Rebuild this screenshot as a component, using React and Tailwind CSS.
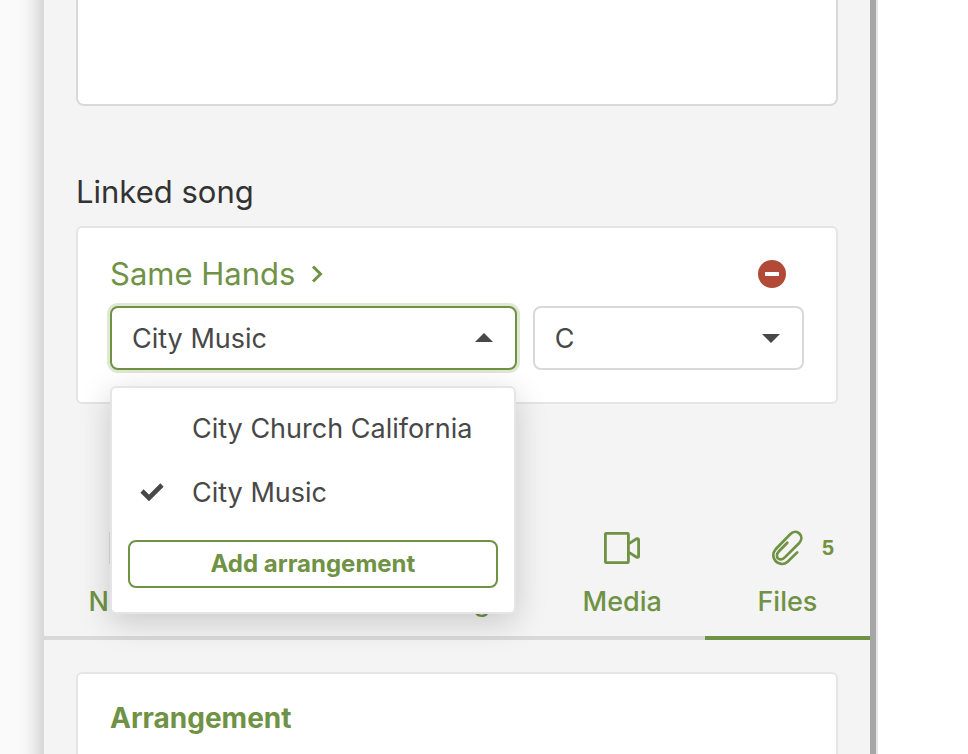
import React, { useState } from 'react';

const arrangements = ['City Church California', 'City Music'];

const tabs = [
  { id: 'notes', label: 'Notes', icon: NotesIcon },
  { id: 'times', label: 'Times' },
  { id: 'song', label: 'Song' },
  { id: 'media', label: 'Media', icon: MediaIcon },
  { id: 'files', label: 'Files', icon: PaperclipIcon, count: 5 },
];

function NotesIcon() {
  return (
    <svg width="36" height="32" viewBox="0 0 36 32" fill="none" stroke="#dedede" aria-hidden="true">
      <rect x="0.5" y="0.5" width="35" height="31" />
    </svg>
  );
}

function MediaIcon() {
  return (
    <svg width="36" height="32" viewBox="0 0 36 32" fill="none" stroke="currentColor" strokeWidth="2.8" strokeLinejoin="round" aria-hidden="true">
      <rect x="1.4" y="1.4" width="23" height="29.2" rx="0.8" />
      <path d="M25 11.6 32.6 6.8Q34.6 6 34.6 7.8V24.2Q34.6 26 32.6 25.2L25 20.4" />
    </svg>
  );
}

function PaperclipIcon() {
  return (
    <svg width="32" height="36" viewBox="0 0 32 36" fill="none" stroke="currentColor" strokeWidth="2.7" strokeLinecap="round" aria-hidden="true">
      <path d="M16.3 12.7 8 21.3C2.8 26.8 8.6 32.6 13.8 27.4L28 13.2C34.6 6.3 25.9-2.3 19.2 4.3L4.6 19.3C-2.6 27.2 8.2 39 16.6 31.7L26.2 22.4" />
    </svg>
  );
}

function Caret({ up }) {
  return (
    <svg
      className="pointer-events-none absolute top-1/2 right-6 -translate-y-1/2"
      width="18"
      height="10"
      viewBox="0 0 18 10"
      fill="#484848"
      aria-hidden="true"
    >
      <path d={up ? 'M0 9 9 0 18 9Z' : 'M0 1H18L9 10Z'} />
    </svg>
  );
}

export default function App() {
  const [arrangement, setArrangement] = useState('City Music');
  const [activeTab, setActiveTab] = useState('files');

  return (
    <div className="flex min-h-screen bg-white font-['Inter',sans-serif] text-[#484848]">
      {/* Page behind the panel */}
      <div className="w-11 shrink-0 border-r-2 border-[#d9d9d9] bg-[linear-gradient(to_right,#fafafa_40%,#f6f6f6_60%,#ebebeb_80%,#dadada)]"></div>

      <main className="min-w-0 flex-1 bg-[#f4f4f4]">
        <div className="px-8">
          <textarea
            aria-label="Description"
            className="block h-[106px] w-full resize-none rounded-b-lg border-2 border-t-0 border-[#d9d9d9] bg-white p-5 text-[27px] outline-none"
          />

          <h2 className="mt-16 pt-0.5 text-[31px] leading-10 text-[#333333]">Linked song</h2>

          <section className="mt-3.5 rounded-md border-2 border-[#e5e5e5] bg-white px-8 pt-[26px] pb-8">
            <div className="flex items-center justify-between pr-[18px]">
              <a href="#song" className="flex items-center gap-4 text-[31px] leading-10 text-[#6f9245]">
                Same Hands
                <svg width="14" height="18" viewBox="0 0 14 18" fill="none" stroke="currentColor" strokeWidth="3" aria-hidden="true">
                  <path d="M2 1.5 9.5 9 2 16.5" />
                </svg>
              </a>
              <button type="button" aria-label="Unlink song">
                <svg className="block" width="28" height="28" viewBox="0 0 28 28" aria-hidden="true">
                  <circle cx="14" cy="14" r="14" fill="#b14b38" />
                  <rect x="7" y="12" width="14" height="4" fill="#fff" />
                </svg>
              </button>
            </div>

            <div className="mt-3 flex gap-4">
              <div className="relative min-w-0 flex-[3]">
                <select
                  aria-label="Arrangement"
                  value={arrangement}
                  onChange={(e) => setArrangement(e.target.value)}
                  className="h-16 w-full appearance-none rounded-lg border-2 border-[#6f9245] bg-white px-5 pt-0.5 text-[27px] outline-none ring-3 ring-[#dfe8d3]"
                >
                  {arrangements.map((name) => (
                    <option key={name}>{name}</option>
                  ))}
                </select>
                <Caret up />

                {/* Arrangement menu */}
                <div className="absolute top-full right-px left-0 z-10 mt-4 rounded-md border-2 border-[#e5e5e5] bg-white pt-2 pb-6 shadow-[0_8px_32px_rgba(0,0,0,0.18)]">
                  {arrangements.map((name) => (
                    <button
                      key={name}
                      type="button"
                      onClick={() => setArrangement(name)}
                      className="flex h-16 w-full items-center gap-7 px-7 pt-0.5 text-left text-[27px] whitespace-nowrap"
                    >
                      <span className="w-6 shrink-0">
                        {name === arrangement && (
                          <svg className="block" width="24" height="20" viewBox="0 0 24 20" fill="none" stroke="#484848" strokeWidth="4.6" aria-hidden="true">
                            <path d="M2 8 9 15 22 2" />
                          </svg>
                        )}
                      </span>
                      {name}
                    </button>
                  ))}
                  <div className="px-4 pt-4">
                    <button
                      type="button"
                      className="h-12 w-full rounded-lg border-2 border-[#6f9245] text-2xl font-bold text-[#6f9245]"
                    >
                      Add arrangement
                    </button>
                  </div>
                </div>
              </div>

              <div className="relative min-w-0 flex-[2]">
                <select
                  aria-label="Key"
                  defaultValue="C"
                  className="h-16 w-full appearance-none rounded-lg border-2 border-[#d9d9d9] bg-white px-5 pt-0.5 text-[27px] outline-none"
                >
                  <option>C</option>
                </select>
                <Caret />
              </div>
            </div>
          </section>
        </div>

        <nav className="mt-[124px] grid grid-cols-5 text-[#6f9245]">
          {tabs.map(({ id, label, icon: Icon, count }) => (
            <button
              key={id}
              type="button"
              onClick={() => setActiveTab(id)}
              className={
                id === activeTab
                  ? 'border-b-4 border-[#6f9245] pb-3.5 text-[27px] leading-10 font-medium'
                  : 'border-b-4 border-[#d9d9d9] pb-3.5 text-[27px] leading-10 font-medium'
              }
            >
              <span className="relative mx-auto flex h-10 w-9 items-center justify-center">
                {Icon && <Icon />}
                {count && (
                  <span className="absolute left-full ml-4 text-xl font-bold">{count}</span>
                )}
              </span>
              <span className="mt-3.5 block">{label}</span>
            </button>
          ))}
        </nav>

        <div className="px-8 pt-8">
          <section className="rounded-t-md border-2 border-b-0 border-[#e5e5e5] bg-white px-8 pt-6 pb-4">
            <h3 className="text-[28px] leading-10 font-bold text-[#6f9245]">Arrangement</h3>
          </section>
        </div>
      </main>

      {/* Panel edge */}
      <div className="w-2 shrink-0 border-r-2 border-[#e5e5e5] bg-[#a6a6a6]"></div>
      <div className="w-[90px] shrink-0"></div>
    </div>
  );
}
